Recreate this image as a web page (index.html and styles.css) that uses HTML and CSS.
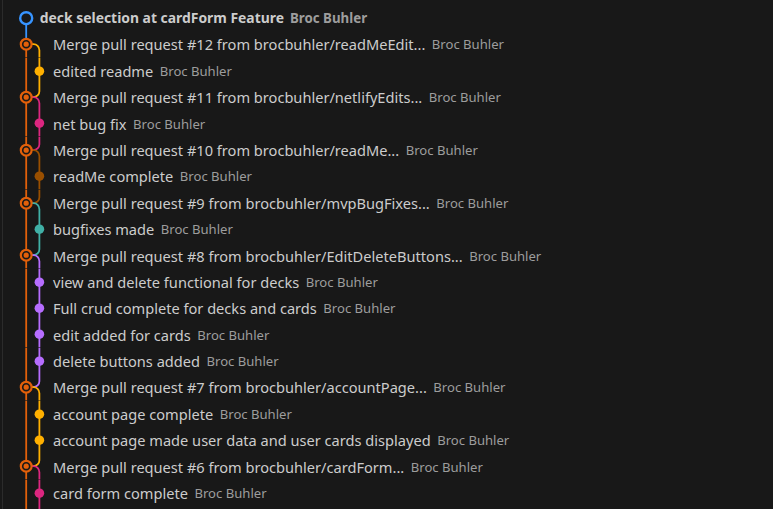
FILE: index.html
```html
<!DOCTYPE html>
<html>
<head>
<meta charset="utf-8">
<link rel="stylesheet" href="styles.css">
</head>
<body>
<div class="panel">
  <div class="row head">
    <svg class="graph g1" viewBox="0 0 26.4 26.4"><path d="M13.2 13.2V26.4" stroke="#3794ff"/><circle class="ring" cx="13.2" cy="13.2" r="6" stroke="#3794ff"/></svg>
    <span class="msg">deck selection at cardForm Feature</span><span class="author">Broc Buhler</span>
  </div>

  <div class="row">
    <svg class="graph" viewBox="0 0 39.6 26.4"><path d="M13.2 0V13.2" stroke="#3794ff"/><path d="M13.2 13.2V26.4" stroke="#e2600a"/><path d="M13.2 13.2H20.4A6 6 0 0 1 26.4 19.2V26.4" stroke="#ffb000"/><circle class="mring" cx="13.2" cy="13.2" r="5.4" stroke="#e2600a"/><circle cx="13.2" cy="13.2" r="2.6" fill="#e2600a"/></svg>
    <span class="msg">Merge pull request #12 from brocbuhler/readMeEdit...</span><span class="author">Broc Buhler</span>
  </div>
  <div class="row">
    <svg class="graph" viewBox="0 0 39.6 26.4"><path d="M13.2 0V26.4" stroke="#e2600a"/><path d="M26.4 0V26.4" stroke="#ffb000"/><circle cx="26.4" cy="13.2" r="4.8" fill="#ffb000"/></svg>
    <span class="msg">edited readme</span><span class="author">Broc Buhler</span>
  </div>

  <div class="row">
    <svg class="graph" viewBox="0 0 39.6 26.4"><path d="M13.2 0V26.4" stroke="#e2600a"/><path d="M26.4 0V7.2A6 6 0 0 1 20.4 13.2H13.2" stroke="#ffb000"/><path d="M13.2 13.2H20.4A6 6 0 0 1 26.4 19.2V26.4" stroke="#dc267f"/><circle class="mring" cx="13.2" cy="13.2" r="5.4" stroke="#e2600a"/><circle cx="13.2" cy="13.2" r="2.6" fill="#e2600a"/></svg>
    <span class="msg">Merge pull request #11 from brocbuhler/netlifyEdits...</span><span class="author">Broc Buhler</span>
  </div>
  <div class="row">
    <svg class="graph" viewBox="0 0 39.6 26.4"><path d="M13.2 0V26.4" stroke="#e2600a"/><path d="M26.4 0V26.4" stroke="#dc267f"/><circle cx="26.4" cy="13.2" r="4.8" fill="#dc267f"/></svg>
    <span class="msg">net bug fix</span><span class="author">Broc Buhler</span>
  </div>

  <div class="row">
    <svg class="graph" viewBox="0 0 39.6 26.4"><path d="M13.2 0V26.4" stroke="#e2600a"/><path d="M26.4 0V7.2A6 6 0 0 1 20.4 13.2H13.2" stroke="#dc267f"/><path d="M13.2 13.2H20.4A6 6 0 0 1 26.4 19.2V26.4" stroke="#994f00"/><circle class="mring" cx="13.2" cy="13.2" r="5.4" stroke="#e2600a"/><circle cx="13.2" cy="13.2" r="2.6" fill="#e2600a"/></svg>
    <span class="msg">Merge pull request #10 from brocbuhler/readMe...</span><span class="author">Broc Buhler</span>
  </div>
  <div class="row">
    <svg class="graph" viewBox="0 0 39.6 26.4"><path d="M13.2 0V26.4" stroke="#e2600a"/><path d="M26.4 0V26.4" stroke="#994f00"/><circle cx="26.4" cy="13.2" r="4.8" fill="#994f00"/></svg>
    <span class="msg">readMe complete</span><span class="author">Broc Buhler</span>
  </div>

  <div class="row">
    <svg class="graph" viewBox="0 0 39.6 26.4"><path d="M13.2 0V26.4" stroke="#e2600a"/><path d="M26.4 0V7.2A6 6 0 0 1 20.4 13.2H13.2" stroke="#994f00"/><path d="M13.2 13.2H20.4A6 6 0 0 1 26.4 19.2V26.4" stroke="#40b0a6"/><circle class="mring" cx="13.2" cy="13.2" r="5.4" stroke="#e2600a"/><circle cx="13.2" cy="13.2" r="2.6" fill="#e2600a"/></svg>
    <span class="msg">Merge pull request #9 from brocbuhler/mvpBugFixes...</span><span class="author">Broc Buhler</span>
  </div>
  <div class="row">
    <svg class="graph" viewBox="0 0 39.6 26.4"><path d="M13.2 0V26.4" stroke="#e2600a"/><path d="M26.4 0V26.4" stroke="#40b0a6"/><circle cx="26.4" cy="13.2" r="4.8" fill="#40b0a6"/></svg>
    <span class="msg">bugfixes made</span><span class="author">Broc Buhler</span>
  </div>

  <div class="row">
    <svg class="graph" viewBox="0 0 39.6 26.4"><path d="M13.2 0V26.4" stroke="#e2600a"/><path d="M26.4 0V7.2A6 6 0 0 1 20.4 13.2H13.2" stroke="#40b0a6"/><path d="M13.2 13.2H20.4A6 6 0 0 1 26.4 19.2V26.4" stroke="#b66dff"/><circle class="mring" cx="13.2" cy="13.2" r="5.4" stroke="#e2600a"/><circle cx="13.2" cy="13.2" r="2.6" fill="#e2600a"/></svg>
    <span class="msg">Merge pull request #8 from brocbuhler/EditDeleteButtons...</span><span class="author">Broc Buhler</span>
  </div>
  <div class="row">
    <svg class="graph" viewBox="0 0 39.6 26.4"><path d="M13.2 0V26.4" stroke="#e2600a"/><path d="M26.4 0V26.4" stroke="#b66dff"/><circle cx="26.4" cy="13.2" r="4.8" fill="#b66dff"/></svg>
    <span class="msg">view and delete functional for decks</span><span class="author">Broc Buhler</span>
  </div>
  <div class="row">
    <svg class="graph" viewBox="0 0 39.6 26.4"><path d="M13.2 0V26.4" stroke="#e2600a"/><path d="M26.4 0V26.4" stroke="#b66dff"/><circle cx="26.4" cy="13.2" r="4.8" fill="#b66dff"/></svg>
    <span class="msg">Full crud complete for decks and cards</span><span class="author">Broc Buhler</span>
  </div>
  <div class="row">
    <svg class="graph" viewBox="0 0 39.6 26.4"><path d="M13.2 0V26.4" stroke="#e2600a"/><path d="M26.4 0V26.4" stroke="#b66dff"/><circle cx="26.4" cy="13.2" r="4.8" fill="#b66dff"/></svg>
    <span class="msg">edit added for cards</span><span class="author">Broc Buhler</span>
  </div>
  <div class="row">
    <svg class="graph" viewBox="0 0 39.6 26.4"><path d="M13.2 0V26.4" stroke="#e2600a"/><path d="M26.4 0V26.4" stroke="#b66dff"/><circle cx="26.4" cy="13.2" r="4.8" fill="#b66dff"/></svg>
    <span class="msg">delete buttons added</span><span class="author">Broc Buhler</span>
  </div>

  <div class="row">
    <svg class="graph" viewBox="0 0 39.6 26.4"><path d="M13.2 0V26.4" stroke="#e2600a"/><path d="M26.4 0V7.2A6 6 0 0 1 20.4 13.2H13.2" stroke="#b66dff"/><path d="M13.2 13.2H20.4A6 6 0 0 1 26.4 19.2V26.4" stroke="#ffb000"/><circle class="mring" cx="13.2" cy="13.2" r="5.4" stroke="#e2600a"/><circle cx="13.2" cy="13.2" r="2.6" fill="#e2600a"/></svg>
    <span class="msg">Merge pull request #7 from brocbuhler/accountPage...</span><span class="author">Broc Buhler</span>
  </div>
  <div class="row">
    <svg class="graph" viewBox="0 0 39.6 26.4"><path d="M13.2 0V26.4" stroke="#e2600a"/><path d="M26.4 0V26.4" stroke="#ffb000"/><circle cx="26.4" cy="13.2" r="4.8" fill="#ffb000"/></svg>
    <span class="msg">account page complete</span><span class="author">Broc Buhler</span>
  </div>
  <div class="row">
    <svg class="graph" viewBox="0 0 39.6 26.4"><path d="M13.2 0V26.4" stroke="#e2600a"/><path d="M26.4 0V26.4" stroke="#ffb000"/><circle cx="26.4" cy="13.2" r="4.8" fill="#ffb000"/></svg>
    <span class="msg">account page made user data and user cards displayed</span><span class="author">Broc Buhler</span>
  </div>

  <div class="row">
    <svg class="graph" viewBox="0 0 39.6 26.4"><path d="M13.2 0V26.4" stroke="#e2600a"/><path d="M26.4 0V7.2A6 6 0 0 1 20.4 13.2H13.2" stroke="#ffb000"/><path d="M13.2 13.2H20.4A6 6 0 0 1 26.4 19.2V26.4" stroke="#dc267f"/><circle class="mring" cx="13.2" cy="13.2" r="5.4" stroke="#e2600a"/><circle cx="13.2" cy="13.2" r="2.6" fill="#e2600a"/></svg>
    <span class="msg">Merge pull request #6 from brocbuhler/cardForm...</span><span class="author">Broc Buhler</span>
  </div>
  <div class="row">
    <svg class="graph" viewBox="0 0 39.6 26.4"><path d="M13.2 0V26.4" stroke="#e2600a"/><path d="M26.4 0V26.4" stroke="#dc267f"/><circle cx="26.4" cy="13.2" r="4.8" fill="#dc267f"/></svg>
    <span class="msg">card form complete</span><span class="author">Broc Buhler</span>
  </div>
  <div class="row">
    <svg class="graph" viewBox="0 0 39.6 26.4"><path d="M13.2 0V26.4" stroke="#e2600a"/><path d="M26.4 0V26.4" stroke="#dc267f"/></svg>
  </div>
</div>
</body>
</html>
```
FILE: styles.css
```css
html, body {
  margin: 0;
  padding: 0;
  background: #181818;
  height: 100%;
  overflow: hidden;
}
body {
  font-family: "Noto Sans", "Open Sans", sans-serif;
  color: #cccccc;
}
.panel {
  margin-left: 2px;
  border-left: 1px solid #2b2b2b;
  height: 100%;
  padding-top: 4.8px;
  box-sizing: border-box;
}
.row {
  display: flex;
  align-items: center;
  height: 26.4px;
  padding-left: 9.6px;
  white-space: nowrap;
}
.graph {
  flex: none;
  width: 39.6px;
  height: 26.4px;
  margin-right: 0.8px;
}
.graph.g1 {
  width: 26.4px;
}
.graph path {
  fill: none;
  stroke-width: 1.8;
}
.graph .ring {
  fill: #181818;
  stroke-width: 2.4;
}
.graph .mring {
  fill: #181818;
  stroke-width: 2.2;
}
.msg {
  font-size: 14.6px;
  color: #cccccc;
}
.author {
  font-size: 13.1px;
  color: #9d9d9d;
  margin-left: 6.5px;
}
.head .msg {
  font-weight: 700;
  font-size: 13.9px;
}
.head .author {
  font-weight: 700;
  font-size: 13.3px;
  margin-left: 6px;
}
```
